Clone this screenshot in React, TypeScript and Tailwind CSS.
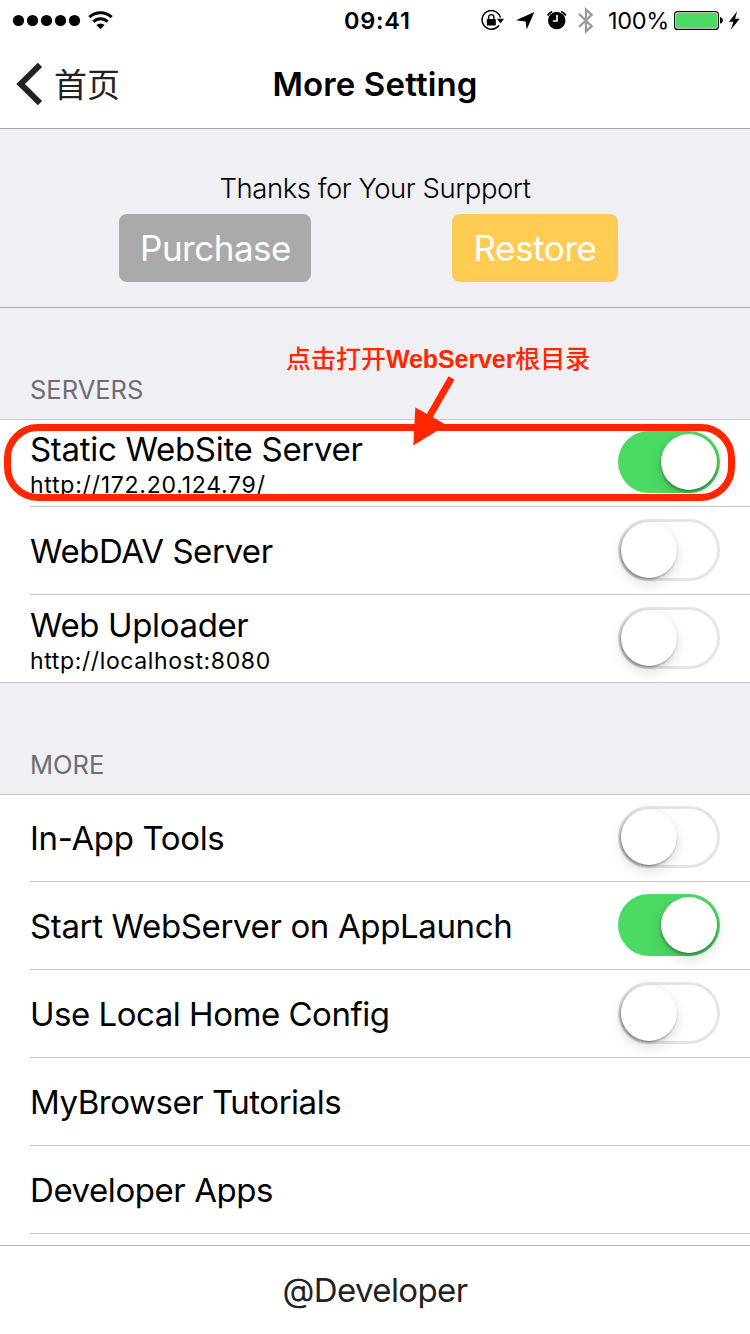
import React from 'react';

function Switch({ on = false }: { on?: boolean }) {
  return (
    <span
      className={
        on
          ? 'mb-[2px] flex h-[62px] w-[102px] shrink-0 items-center justify-end rounded-full bg-[#4cd964] pr-[3px]'
          : 'mb-[2px] flex h-[62px] w-[102px] shrink-0 items-center justify-start rounded-full border-[3px] border-[#e5e5e5] bg-white'
      }
    >
      <span
        className={
          on
            ? 'h-[56px] w-[56px] rounded-full bg-white shadow-[0_6px_14px_rgba(0,0,0,0.14),0_2px_3px_rgba(0,0,0,0.35)]'
            : 'h-[56px] w-[56px] rounded-full bg-white shadow-[0_6px_14px_rgba(0,0,0,0.13),-1px_1.5px_3px_rgba(0,0,0,0.42)]'
        }
      />
    </span>
  );
}

type RowProps = {
  title: string;
  tracking: string;
  url?: string;
  urlTracking?: string;
  toggle?: 'on' | 'off';
  last?: boolean;
  first?: boolean;
};

function Row({ title, tracking, url, urlTracking, toggle, last, first }: RowProps) {
  return (
    <div className={`flex pl-[30px] ${last ? 'border-b border-[#c8c7cc]' : ''} ${first ? 'h-[87px]' : 'h-[88px]'}`}>
      <div className={`flex flex-1 items-center justify-between pr-[30px] ${last ? '' : 'border-b border-[#c8c7cc]'}`}>
        <div className={`flex flex-col ${url ? 'pt-[4px]' : ''}`}>
          <span className={`whitespace-nowrap text-[33px] ${url ? 'leading-[40px]' : 'leading-[44px]'} ${tracking}`}>{title}</span>
          {url && <span className={`whitespace-nowrap text-[23px] leading-[32px] ${urlTracking}`}>{url}</span>}
        </div>
        {toggle && <Switch on={toggle === 'on'} />}
      </div>
    </div>
  );
}

function StatusBar() {
  return (
    <div className="flex h-[40px] items-center">
      <div className="flex w-[344px] shrink-0 items-center">
        <svg width="120" height="40" viewBox="0 0 120 40">
          {[18.5, 32.5, 46.5, 60.5, 74.5].map((x) => (
            <circle key={x} cx={x} cy="20.5" r="5.6" />
          ))}
          <g fill="none" stroke="#000" strokeWidth="3">
            <path d="M89.3 17.2A16.2 16.2 0 0 1 111.7 17.2" />
            <path d="M93.3 21.6A10.3 10.3 0 0 1 107.7 21.6" />
          </g>
          <path d="M96.4 25.1A5.8 5.8 0 0 1 104.6 25.1L100.5 29.2Z" />
        </svg>
      </div>
      <span className="w-[134px] pt-[2px] text-[23.5px] font-semibold leading-[40px] tracking-[0.75px]">09:41</span>
      <svg width="130" height="40" viewBox="478 0 130 40">
        <path d="M500.4 17.5A9.3 9.3 0 1 0 499 25.2" fill="none" stroke="#000" strokeWidth="1.5" />
        <path d="M497 18.8H504L500.5 23.4Z" />
        <rect x="486.8" y="19" width="9" height="6.4" rx=".6" />
        <path d="M488.7 19.5V17.2a2.6 2.6 0 0 1 5.2 0V19.5" fill="none" stroke="#000" strokeWidth="1.4" />
        <path d="M534.3 12L526.7 29.5L525.6 21.5L516 20.3Z" />
        <circle cx="556.7" cy="20.5" r="8.7" />
        <path d="M547.6 15.5A10 10 0 0 1 552.2 11.5M561.2 11.5A10 10 0 0 1 565.8 15.5" fill="none" stroke="#000" strokeWidth="1.8" />
        <path d="M557 15V21H552.8" fill="none" stroke="#fff" strokeWidth="1.6" />
        <path d="M579 14L591.7 26.2L586 31.4V9.6L591.7 14.8L579 27" fill="none" stroke="#999" strokeWidth="2.3" />
      </svg>
      <span className="w-[66px] whitespace-nowrap pt-[1px] text-[23.5px] leading-[40px] tracking-[-0.3px]">100%</span>
      <svg width="76" height="40" viewBox="674 0 76 40">
        <rect x="674.6" y="11.6" width="43.8" height="17.8" rx="3" fill="#fff" stroke="#000" strokeWidth="1.2" />
        <rect x="676" y="13" width="41" height="15" rx="1.8" fill="#4cd964" />
        <path d="M720 17C723.8 17.5 723.8 23 720 23.6Z" />
        <path d="M737.2 11.3L729 21.8H733.4L730.8 29.8L739.8 18.8H735Z" />
      </svg>
    </div>
  );
}

export default function App() {
  return (
    <div className="relative flex h-[1334px] w-[750px] flex-col overflow-hidden bg-white font-['Inter','Noto_Sans_CJK_SC',sans-serif] text-black">
      <header className="flex h-[129px] shrink-0 flex-col border-b border-[#a7a7aa]">
        <StatusBar />
        <div className="grid h-[88px] grid-cols-[1fr_auto_1fr] items-center">
          <div className="flex items-center pl-[16px] text-[#222]">
            <svg width="27" height="44" viewBox="16 62 27 44">
              <path d="M40 64.8L20.6 84L40 103.2" fill="none" stroke="#222" strokeWidth="6" />
            </svg>
            <span className="-mt-[2px] ml-[11px] font-['Noto_Sans_CJK_SC',sans-serif] text-[33px] leading-[44px]">首页</span>
          </div>
          <h1 className="text-[33px] font-semibold leading-[44px] tracking-[0.15px]">More Setting</h1>
          <span />
        </div>
      </header>

      <section className="flex h-[179px] shrink-0 flex-col items-center border-b border-[#a7a7aa] bg-[#efeff4] pt-[43px]">
        <p className="whitespace-nowrap text-[27.5px] font-light leading-[32px] tracking-[-0.47px]">Thanks for Your Surpport</p>
        <div className="mt-[10px] flex w-full pl-[119px]">
          <button className="flex h-[68px] w-[192px] items-center justify-center rounded-[8px] bg-[#aaa] pl-[1px] text-[35px] tracking-[-0.5px] text-white">Purchase</button>
          <button className="ml-[141px] flex h-[68px] w-[166px] items-center justify-center rounded-[8px] bg-[#ffcc53] text-[35px] tracking-[-0.4px] text-white">Restore</button>
        </div>
      </section>

      <h2 className="flex h-[112px] shrink-0 items-end border-b border-[#c8c7cc] bg-[#efeff4] pb-[13px] pl-[30px] text-[25.5px] leading-[32px] text-[#6d6d72]">SERVERS</h2>
      <Row first title="Static WebSite Server" tracking="tracking-[-0.3px]" url="http://172.20.124.79/" urlTracking="tracking-[0.76px]" toggle="on" />
      <Row title="WebDAV Server" tracking="tracking-[-0.45px]" toggle="off" />
      <Row last title="Web Uploader" tracking="tracking-[-0.37px]" url="http://localhost:8080" urlTracking="tracking-[0.62px]" toggle="off" />

      <h2 className="flex h-[112px] shrink-0 items-end border-b border-[#c8c7cc] bg-[#efeff4] pb-[13px] pl-[30px] text-[25.5px] leading-[32px] text-[#6d6d72]">MORE</h2>
      <Row first title="In-App Tools" tracking="tracking-[-0.35px]" toggle="off" />
      <Row title="Start WebServer on AppLaunch" tracking="tracking-[-0.36px]" toggle="on" />
      <Row title="Use Local Home Config" tracking="tracking-[-0.48px]" toggle="off" />
      <Row title="MyBrowser Tutorials" tracking="tracking-[-0.48px]" />
      <Row title="Developer Apps" tracking="tracking-[-0.43px]" />

      <footer className="mt-[11px] flex h-[89px] shrink-0 items-center justify-center border-t border-[#b2b2b2] pt-[2px] text-[33px] tracking-[-0.6px] text-[#222]">@Developer</footer>

      <div className="absolute left-[4px] top-[424px] h-[77px] w-[731px] rounded-[34px] border-[7px] border-[#ff2600]" />
      <svg className="absolute left-[405px] top-[370px]" width="60" height="80" viewBox="405 370 60 80">
        <path d="M451.5 378L429 417" stroke="#ff2600" strokeWidth="6.8" />
        <path d="M415.3 407.5L446.5 425L413.3 445.5Z" fill="#ff2600" />
      </svg>
      <p className="absolute left-[286px] top-[343px] whitespace-nowrap font-['Liberation_Sans','Noto_Sans_CJK_SC',sans-serif] text-[25px] font-medium leading-[32px] text-[#ff2600]">
        点击打开<span className="font-bold tracking-[-0.1px]">WebServer</span>根目录
      </p>
    </div>
  );
}
